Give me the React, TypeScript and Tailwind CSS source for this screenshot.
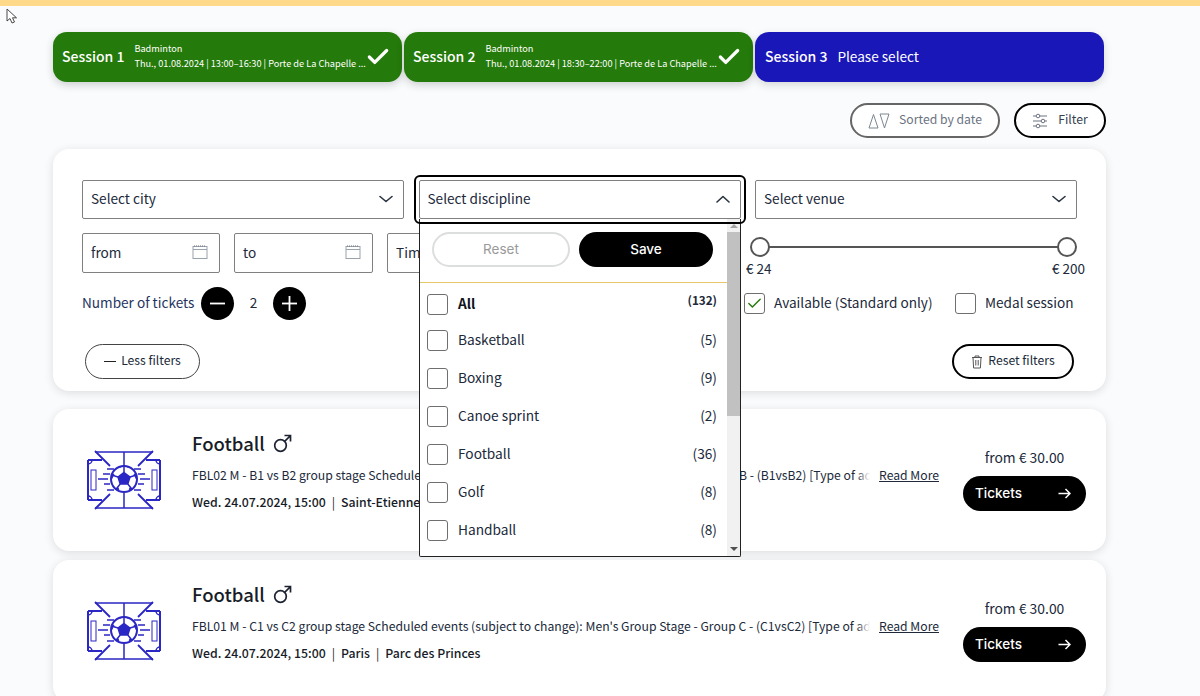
import React from "react";
import { Check } from "lucide-react";

const Chevron = ({ up = false }: { up?: boolean }) => (
  <svg width="14" height="8" viewBox="0 0 14 8" fill="none" stroke="#2a3342" strokeWidth="1.6" strokeLinecap="round" strokeLinejoin="round">
    <path d={up ? "M1 7 7 1.5 13 7" : "M1 1.5 7 6.5 13 1.5"} />
  </svg>
);

const Calendar = () => (
  <svg width="16" height="15" viewBox="0 0 16 15" fill="none" strokeWidth="1">
    <rect x="1" y="1.5" width="14" height="12" stroke="#9aa3ad" />
    <path d="M1 4.5h14" stroke="#9aa3ad" />
    <path d="M2 1h12" stroke="#6b7580" strokeDasharray="1 1" />
  </svg>
);

const Box = ({ checked = false }: { checked?: boolean }) => (
  <span className="flex h-[21px] w-[21px] shrink-0 items-center justify-center rounded-[3px] border border-[#6f6f6f] bg-white">
    {checked && <Check size={17} strokeWidth={2} color="#247a0a" />}
  </span>
);

const SelectBox = ({ label, up = false, focus = false }: { label: string; up?: boolean; focus?: boolean }) => (
  <div className="relative flex h-[39px] items-center justify-between rounded-[2px] border-[1.5px] border-[#808080] bg-white pb-[2px] pl-2 pr-[10px] text-[13.6px] text-[#20293a]">
    <span>{label}</span>
    <Chevron up={up} />
    {focus && <span className="absolute -inset-x-[6px] -bottom-[6px] -top-[6px] z-20 rounded-[6px] border-2 border-black" />}
  </div>
);

const DateBox = ({ label, className }: { label: string; className: string }) => (
  <div className={`flex h-[40px] shrink-0 items-center justify-between rounded-[2px] border-[1.5px] border-[#808080] bg-white pb-[2px] pl-2 pr-[11px] text-[13.6px] text-[#20293a] ${className}`}>
    <span>{label}</span>
    <Calendar />
  </div>
);

const Round = ({ plus = false }: { plus?: boolean }) => (
  <span className="flex h-[33px] w-[33px] shrink-0 items-center justify-center rounded-full bg-black">
    <svg width="17" height="17" viewBox="0 0 17 17" stroke="#fff" strokeWidth="1.8">
      <path d="M1 8.5h15" />
      {plus && <path d="M8.5 1v15" />}
    </svg>
  </span>
);

const Session = ({ n, time }: { n: number; time: string }) => (
  <div className="flex h-[50px] min-w-0 items-center rounded-[14px] bg-[#247a0a] pl-[9px] pr-[11px] text-white shadow-[0_3px_8px_rgba(0,0,0,0.18)]">
    <span className="mr-[10px] whitespace-nowrap pb-[2px] text-[14px] font-medium">Session {n}</span>
    <div className="min-w-0 flex-1 pb-[3px] text-[9.2px] leading-[15px]">
      <div>Badminton</div>
      <div className="whitespace-nowrap">Thu., 01.08.2024 | {time} | Porte de La Chapelle ...</div>
    </div>
    <Check size={26} strokeWidth={3} className="shrink-0" />
  </div>
);

const FootballIcon = () => (
  <svg width="74" height="60" viewBox="0 0 74 60" fill="none" stroke="#2b27c4" strokeWidth="1.5">
    <path d="M1 10h14M59 10h14M1 10v40M73 10v40M1 50h14M59 50h14" strokeWidth="2" />
    <path d="M8 2h58M8 58h58M37 2v15M37 43v15" />
    <path d="M8 1l15 15M66 1 51 16M8 59l15-15M66 59 51 44" strokeWidth="1.8" />
    <path d="M1 14a4 4 0 0 0 4-4M73 14a4 4 0 0 1-4-4M1 46a4 4 0 0 1 4 4M73 46a4 4 0 0 0-4 4" />
    <rect x="4" y="20" width="5" height="20" strokeWidth="1" />
    <rect x="65" y="20" width="5" height="20" strokeWidth="1" />
    <path d="M11 29h10M63 29H53M16 24h7M51 24h7M17 34h6M51 34h6M20 19h7M47 19h7M20 40h7M47 40h7" />
    <circle cx="37" cy="29" r="13" fill="#fff" strokeWidth="2" />
    <path d="M37 22.5l6 4.5-2.2 7h-7.6l-2.2-7z" fill="#2b27c4" />
    <path d="M37 22.5V16M43 27l6.5-2M40.8 34l4 5M33.2 34l-4 5M31 27l-6.5-2" />
    <path d="M33 17l4 -1 4 1-1-.6h-6zM47 24l2 1 .4 4zM27 24l-2 1-.4 4zM43 37.5l2 1.5-3 1.5zM31 37.5l-2 1.5 3 1.5z" fill="#2b27c4" strokeWidth="1" />
  </svg>
);

const Mars = () => (
  <svg width="19" height="19" viewBox="0 0 19 19" fill="none" stroke="#1c2230" strokeWidth="1.7">
    <circle cx="7.5" cy="11.5" r="5.8" />
    <path d="M11.7 7.3 17.5 1.5M11.5 1.5h6v6" />
  </svg>
);

const EventCard = ({ desc, date, place }: { desc: string; date: string; place: React.ReactNode }) => (
  <div className="flex h-[142px] shrink-0 items-start rounded-[16px] bg-white pl-[34px] pr-[20px] shadow-[0_2px_10px_rgba(0,0,0,0.12)]">
    <div className="mr-[31px] mt-[41px] shrink-0">
      <FootballIcon />
    </div>
    <div className="mt-[20px] w-[747px] min-w-0 shrink-0 text-[#20293a]">
      <div className="flex items-center gap-[8px] text-[18.5px] font-medium leading-[28px] text-[#171c28]">
        Football <Mars />
      </div>
      <div className="mt-[8px] flex items-center justify-between text-[12.2px] leading-[20px]">
        <div className="relative w-[678px] overflow-hidden whitespace-nowrap">
          {desc}
          <span className="absolute inset-y-0 right-0 w-[14px] bg-gradient-to-r from-transparent to-white" />
        </div>
        <span className="underline">Read More</span>
      </div>
      <div className="mt-[7px] flex items-center gap-[6px] text-[12.3px] font-medium leading-[20px] text-[#171c28]">
        <span>{date}</span>
        <span className="font-normal">|</span>
        {place}
      </div>
    </div>
    <div className="ml-[24px] mt-[37px] flex w-[123px] shrink-0 flex-col items-center">
      <div className="mb-[8px] text-[13.9px] leading-[22px] text-[#20293a]">from € 30.00</div>
      <div className="flex h-[35px] w-full items-center justify-between rounded-full bg-black pl-[12px] pr-[15px] font-['Inter'] text-[13.5px] font-medium text-white">
        Tickets
        <svg width="13" height="11" viewBox="0 0 13 11" fill="none" stroke="#fff" strokeWidth="1.5">
          <path d="M0.5 5.5h11.5M7.5 1l4.5 4.5L7.5 10" />
        </svg>
      </div>
    </div>
  </div>
);

const items: [string, string][] = [
  ["Basketball", "(5)"],
  ["Boxing", "(9)"],
  ["Canoe sprint", "(2)"],
  ["Football", "(36)"],
  ["Golf", "(8)"],
  ["Handball", "(8)"],
];

const Dropdown = () => (
  <div className="absolute left-[366px] top-[70px] z-10 flex h-[338px] w-[322px] overflow-hidden rounded-b-[2px] border border-t-0 border-[#222] bg-white">
    <div className="w-[307px] shrink-0">
      <div className="flex h-[64px] items-start gap-[9px] border-b border-[#e8c766] pl-[12px] pt-[13px]">
        <div className="flex h-[35px] w-[138px] items-center justify-center rounded-full border-2 border-[#dcdedd] font-['Inter'] text-[13.5px] text-[#9a9a9a]">Reset</div>
        <div className="flex h-[35px] w-[134px] items-center justify-center rounded-full bg-black font-['Inter'] text-[13.5px] font-medium text-white">Save</div>
      </div>
      <div className="flex h-[38px] items-center pl-[7px] pr-[10px] pt-[5px] text-[#0d1220]">
        <Box />
        <span className="ml-[10px] flex-1 pb-[2px] text-[13.7px] font-bold">All</span>
        <span className="-mt-[10px] text-[11.7px] font-bold text-[#20293a]">(132)</span>
      </div>
      {items.map(([n, c]) => (
        <div key={n} className="flex h-[38px] items-center pl-[7px] pr-[10px] text-[13.7px] text-[#20293a]">
          <Box />
          <span className="ml-[10px] flex-1 pb-[2px]">{n}</span>
          <span className="pb-[2px]">{c}</span>
        </div>
      ))}
    </div>
    <div className="flex flex-1 flex-col items-center bg-[#f1f1f1]">
      <div className="flex h-[13px] items-center">
        <span className="h-0 w-0 border-x-[4px] border-b-[4px] border-x-transparent border-b-[#a3a3a3]" />
      </div>
      <div className="h-[184px] w-full bg-[#c1c1c1]" />
      <div className="flex-1" />
      <div className="flex h-[15px] items-center">
        <span className="h-0 w-0 border-x-[4px] border-t-[4px] border-x-transparent border-t-[#505050]" />
      </div>
    </div>
  </div>
);

export default function App() {
  return (
    <div className="relative h-[696px] w-[1200px] overflow-hidden bg-[#fafbfd] font-['Noto_Sans_CJK_SC','Noto_Sans',sans-serif]">
      <div className="h-[6px] bg-[#ffd98a]" />
      <svg className="absolute left-[6px] top-[8px]" width="12" height="17" viewBox="0 0 12 17" fill="#fff" stroke="#333" strokeWidth="0.9">
        <path d="M1 1v12l3-2.5L6 15l2.5-1-2-4.2h4z" />
      </svg>

      <div className="ml-[53px] mt-[26px] w-[1051px]">
        <div className="grid h-[50px] grid-cols-3 gap-[2px]">
          <Session n={1} time="13:00–16:30" />
          <Session n={2} time="18:30–22:00" />
          <div className="flex h-[50px] items-center rounded-[14px] bg-[#1a17b9] pb-[2px] pl-[10px] text-white shadow-[0_3px_8px_rgba(0,0,0,0.15)]">
            <span className="mr-[10px] text-[14px] font-medium">Session 3</span>
            <span className="text-[13.6px]">Please select</span>
          </div>
        </div>
      </div>

      <div className="ml-[53px] w-[1053px]">
        <div className="mt-[21px] flex justify-end gap-[14px] text-[12.2px]">
          <div className="flex h-[35px] w-[150px] items-center justify-center gap-[9px] rounded-full border-2 border-[#666] bg-white text-[#6b7280]">
            <svg width="22" height="16" viewBox="0 0 22 16" fill="none" stroke="#7d8791" strokeWidth="1">
              <path d="M5.5 1.5 10 15H1zM12 1h9l-4.5 14z" />
            </svg>
            <span className="pb-[2px]">Sorted by date</span>
          </div>
          <div className="flex h-[35px] w-[92px] items-center justify-center gap-[10px] rounded-full border-2 border-black bg-white text-[#374151]">
            <svg width="16" height="16" viewBox="0 0 16 16" fill="none" stroke="#6b7280" strokeWidth="1">
              <path d="M1 3h3M8 3h7M1 8h8M13 8h2M1 13h3M8 13h7" />
              <circle cx="6" cy="3" r="1.8" />
              <circle cx="11" cy="8" r="1.8" />
              <circle cx="6" cy="13" r="1.8" />
            </svg>
            <span className="pb-[2px]">Filter</span>
          </div>
        </div>

        <div className="relative mt-[11px] h-[242px] rounded-[16px] bg-white px-[29px] pt-[31px] shadow-[0_2px_10px_rgba(0,0,0,0.12)]">
          <div className="grid grid-cols-3 gap-x-[14.5px]">
            <SelectBox label="Select city" />
            <SelectBox label="Select discipline" up focus />
            <SelectBox label="Select venue" />
          </div>

          <div className="mt-[14px] flex h-[40px]">
            <DateBox label="from" className="w-[138px]" />
            <DateBox label="to" className="ml-[14px] w-[139px]" />
            <div className="ml-[14px] flex h-[40px] w-[354px] shrink-0 items-center rounded-[2px] border-[1.5px] border-[#808080] pb-[2px] pl-2 text-[13.6px] text-[#20293a]">Time</div>
            <div className="ml-[4px] w-[340px] shrink-0">
              <div className="relative flex h-[28px] items-center pl-[15px] pr-[18px]">
                <div className="h-[2px] w-full bg-[#555]" />
                <span className="absolute left-[5px] h-[20px] w-[20px] rounded-full border-2 border-[#555] bg-white" />
                <span className="absolute right-[8px] h-[20px] w-[20px] rounded-full border-2 border-[#555] bg-white" />
              </div>
              <div className="-mt-[1px] flex justify-between pl-[1px] text-[13.5px] leading-[16px] text-[#20293a]">
                <span>€ 24</span>
                <span>€ 200</span>
              </div>
            </div>
          </div>

          <div className="mt-[13px] flex h-[35px] items-center whitespace-nowrap text-[#20293a]">
            <span className="w-[113px] shrink-0 pb-[2px] text-[13.6px] text-[#1f3560]">Number of tickets</span>
            <span className="ml-[6px]"><Round /></span>
            <span className="w-[39px] shrink-0 pb-[2px] text-center text-[13.6px]">2</span>
            <Round plus />
            <div className="ml-[438px] flex shrink-0 items-center text-[13.6px]">
              <Box checked />
              <span className="ml-[9px] w-[160px] pb-[2px]">Available (Standard only)</span>
              <span className="ml-[21px]"><Box /></span>
              <span className="ml-[9px] pb-[2px]">Medal session</span>
            </div>
          </div>

          <div className="mt-[23px] flex justify-between pl-[3px] pr-[3px] text-[12.2px] text-[#20293a]">
            <div className="flex h-[35px] w-[115px] items-center justify-center gap-[5px] rounded-full border-[1.5px] border-[#444] bg-white">
              <span className="h-[1.5px] w-[12px] bg-[#222]" />
              <span className="pb-[2px]">Less filters</span>
            </div>
            <div className="flex h-[35px] w-[122px] items-center justify-center gap-[5px] rounded-full border-2 border-black bg-white">
              <svg width="12" height="14" viewBox="0 0 12 14" fill="none" stroke="#555" strokeWidth="1">
                <path d="M1 2.5h10M4 2.5V1h4v1.5M2 2.5l.6 10.5h6.8L10 2.5M4.8 5v5.5M7.2 5v5.5" />
              </svg>
              <span className="pb-[2px]">Reset filters</span>
            </div>
          </div>

          <Dropdown />
        </div>

        <div className="mt-[18px] flex flex-col gap-[9px]">
          <EventCard
            desc="FBL02 M - B1 vs B2 group stage Scheduled events (subject to change): Men's Group Stage - Group B - (B1vsB2) [Type of admission]"
            date="Wed. 24.07.2024, 15:00"
            place={<span>Saint-Etienne</span>}
          />
          <EventCard
            desc="FBL01 M - C1 vs C2 group stage Scheduled events (subject to change): Men's Group Stage - Group C - (C1vsC2) [Type of admission]"
            date="Wed. 24.07.2024, 15:00"
            place={
              <>
                <span>Paris</span>
                <span className="font-normal">|</span>
                <span>Parc des Princes</span>
              </>
            }
          />
        </div>
      </div>
    </div>
  );
}
